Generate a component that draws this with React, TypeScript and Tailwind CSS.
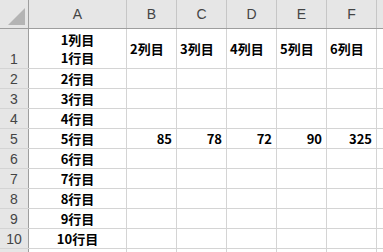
const cols = ["A", "B", "C", "D", "E", "F", ""];
const colW = ["w-[98px]", "w-[50px]", "w-[50px]", "w-[50px]", "w-[50px]", "w-[50px]", "flex-1"];

type Row = { n: string; h: string; cells: (string | null)[] };

const rows: Row[] = [
  { n: "1", h: "h-[40px]", cells: [null, "2列目", "3列目", "4列目", "5列目", "6列目", ""] },
  { n: "2", h: "h-[20px]", cells: ["2行目", "", "", "", "", "", ""] },
  { n: "3", h: "h-[20px]", cells: ["3行目", "", "", "", "", "", ""] },
  { n: "4", h: "h-[20px]", cells: ["4行目", "", "", "", "", "", ""] },
  { n: "5", h: "h-[20px]", cells: ["5行目", "85", "78", "72", "90", "325", ""] },
  { n: "6", h: "h-[20px]", cells: ["6行目", "", "", "", "", "", ""] },
  { n: "7", h: "h-[20px]", cells: ["7行目", "", "", "", "", "", ""] },
  { n: "8", h: "h-[20px]", cells: ["8行目", "", "", "", "", "", ""] },
  { n: "9", h: "h-[20px]", cells: ["9行目", "", "", "", "", "", ""] },
  { n: "10", h: "h-[20px]", cells: ["10行目", "", "", "", "", "", ""] },
  { n: "11", h: "h-[20px]", cells: ["", "", "", "", "", "", ""] },
];

const jp = "font-['Noto_Sans_CJK_JP',sans-serif] font-bold text-[13px] text-black";

export default function App() {
  return (
    <div className="w-[383px] h-[252px] overflow-hidden bg-white">
      {/* column headers */}
      <div className="flex h-[29px] bg-[#e6e6e6] border-b border-[#9e9e9e]">
        <div className="w-[29px] shrink-0 border-r border-[#9e9e9e] relative">
          <svg width="28" height="28" className="absolute left-0 top-0">
            <polygon points="8,25 25,25 25,8" fill="#b4b4b4" />
          </svg>
        </div>
        {cols.map((c, i) => (
          <div
            key={i}
            className={`${colW[i]} shrink-0 flex items-center justify-center ${i < 6 ? "border-r border-[#c6c6c6]" : ""} font-['Liberation_Sans',sans-serif] text-[14px] text-[#444]`}
          >
            {c}
          </div>
        ))}
      </div>

      {rows.map((r) => (
        <div key={r.n} className={`flex ${r.h} shrink-0 border-b border-[#d4d4d4]`}>
          <div className="w-[29px] shrink-0 bg-[#e6e6e6] border-r border-[#9e9e9e] flex items-end justify-center font-['Liberation_Sans',sans-serif] text-[14px] leading-[18px] text-[#444]">
            {r.n}
          </div>
          {r.cells.map((v, i) => {
            const numeric = v !== null && /^\d+$/.test(v);
            return (
              <div
                key={i}
                className={`${colW[i]} shrink-0 flex items-center ${i === 0 ? "justify-center" : numeric ? "justify-end pr-[4px]" : "justify-start pl-[3px]"} ${i < 6 ? "border-r border-[#d4d4d4]" : ""} ${jp} leading-[18px]`}
              >
                {v === null ? (
                  <div className="flex flex-col items-center">
                    <span>1列目</span>
                    <span>1行目</span>
                  </div>
                ) : (
                  v
                )}
              </div>
            );
          })}
        </div>
      ))}
    </div>
  );
}
